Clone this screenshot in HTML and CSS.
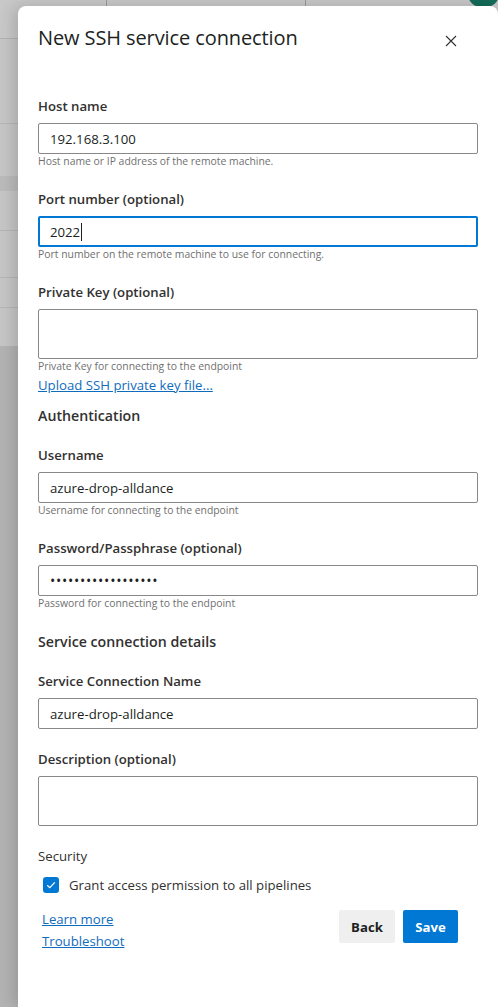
FILE: index.html
```html
<!DOCTYPE html>
<html lang="en">
<head>
<meta charset="utf-8">
<title>New SSH service connection</title>
<link rel="stylesheet" href="styles.css">
</head>
<body>
<div class="page">
  <div class="topbar">
    <div class="tb-cell tb-a"></div>
    <div class="tb-cell tb-b"></div>
    <div class="tb-cell tb-c"><span class="avatar"></span></div>
  </div>
  <div class="row r1"></div>
  <div class="row r2"></div>
  <div class="row r3"></div>
  <div class="row r4"></div>
  <div class="row r5"></div>
  <div class="row r6"></div>
  <div class="row r7"></div>
  <div class="rest"></div>
</div>

<div class="dialog">
  <div class="header">
    <h1 class="title">New SSH service connection</h1>
    <button class="close" aria-label="Close">
      <svg width="12" height="12" viewBox="0 0 12 12"><path d="M1 1 L11 11 M11 1 L1 11" stroke="#323130" stroke-width="1.1" fill="none"/></svg>
    </button>
  </div>

  <div class="field first">
    <label class="label">Host name</label>
    <div class="input"><span>192.168.3.100</span></div>
    <div class="help">Host name or IP address of the remote machine.</div>
  </div>

  <div class="field">
    <label class="label">Port number (optional)</label>
    <div class="input focused"><span>2022</span><span class="caret"></span></div>
    <div class="help">Port number on the remote machine to use for connecting.</div>
  </div>

  <div class="field">
    <label class="label">Private Key (optional)</label>
    <div class="input area"></div>
    <div class="help">Private Key for connecting to the endpoint</div>
    <a class="link upload" href="#">Upload SSH private key file...</a>
  </div>

  <h2 class="section after-link">Authentication</h2>

  <div class="field">
    <label class="label">Username</label>
    <div class="input"><span>azure-drop-alldance</span></div>
    <div class="help">Username for connecting to the endpoint</div>
  </div>

  <div class="field">
    <label class="label">Password/Passphrase (optional)</label>
    <div class="input"><span class="dots">••••••••••••••••••</span></div>
    <div class="help">Password for connecting to the endpoint</div>
  </div>

  <h2 class="section">Service connection details</h2>

  <div class="field">
    <label class="label">Service Connection Name</label>
    <div class="input"><span>azure-drop-alldance</span></div>
  </div>

  <div class="field no-help-above">
    <label class="label">Description (optional)</label>
    <div class="input area"></div>
  </div>

  <div class="security">Security</div>
  <div class="check-row">
    <span class="checkbox">
      <svg width="10" height="8" viewBox="0 0 10 8"><path d="M1.2 4.2 L3.8 6.6 L8.8 1.4" stroke="#fff" stroke-width="1.2" fill="none"/></svg>
    </span>
    <span class="check-text">Grant access permission to all pipelines</span>
  </div>

  <div class="footer">
    <div class="links">
      <a class="link" href="#">Learn more</a>
      <a class="link" href="#">Troubleshoot</a>
    </div>
    <div class="buttons">
      <button class="btn back">Back</button>
      <button class="btn save">Save</button>
    </div>
  </div>
</div>
</body>
</html>
```

FILE: styles.css
```css
* { box-sizing: border-box; }
html, body { margin: 0; padding: 0; }
body {
  width: 498px;
  height: 1007px;
  overflow: hidden;
  position: relative;
  font-family: "Open Sans", "Noto Sans", sans-serif;
  color: #201f1e;
  background: #b3b3b3;
}

/* dimmed page behind the dialog */
.page { display: flex; flex-direction: column; height: 1007px; }
.topbar { display: flex; height: 39px; background: #c8c8c8; border-bottom: 1px solid #b2b2b2; }
.tb-cell { height: 100%; }
.tb-a { width: 107px; border-right: 1px solid #9a9a9a; }
.tb-b { width: 199px; border-right: 1px solid #9a9a9a; }
.tb-c { flex: 1; position: relative; }
.avatar {
  position: absolute; left: 161px; top: -25px;
  width: 33px; height: 33px; border-radius: 50%;
  background: #136b58;
}
.row { background: #c6c6c6; border-bottom: 1px solid #b6b6b6; }
.r1 { height: 85px; }
.r2 { height: 52px; border-bottom: none; }
.r3 { height: 15px; background: #bbbbbb; border-bottom: none; }
.r4 { height: 40px; }
.r5 { height: 47px; }
.r6 { height: 30px; }
.r7 { height: 38px; border-bottom: none; }
.rest { flex: 1; background: #b3b3b3; }

/* dialog overlay */
.dialog {
  position: absolute;
  left: 18px; top: 6px; right: 0; bottom: 0;
  background: #fff;
  border-radius: 8px 8px 0 0;
  box-shadow: -4px 0 16px rgba(0,0,0,0.16);
  padding: 18px 20px 0 20px;
}
.header { display: flex; justify-content: space-between; align-items: flex-start; height: 28px; }
.title { margin: 0; font-size: 20px; line-height: 28px; font-weight: 500; color: #201f1e; letter-spacing: -0.1px; }
.close {
  border: 0; background: none; padding: 0; margin: 11px 21px 0 0;
  width: 12px; height: 12px; display: flex; cursor: pointer;
}

.field { display: flex; flex-direction: column; margin-top: 21px; }
.field.first { margin-top: 44px; }
.field.no-help-above { margin-top: 20px; }
.label { font-size: 13.2px; line-height: 20px; font-weight: 600; color: #323130; }
.input {
  margin-top: 7px;
  height: 31px;
  border: 1px solid #8a8886;
  border-radius: 2px;
  padding: 0 11px;
  display: flex; align-items: center;
  font-size: 13.2px; color: #201f1e;
}
.input.focused { border: 2px solid #0078d4; padding-left: 10px; }
.caret { width: 1px; height: 18px; background: #201f1e; margin-left: 1px; }
.input.area { height: 50px; }
.dots { letter-spacing: 0.75px; font-size: 14px; }
.help { font-size: 10.4px; line-height: 14px; color: #707070; }
.link { font-size: 13.2px; line-height: 20px; color: #0f6cbd; text-decoration: underline; }
.upload { margin-top: 2px; }

.section { margin: 21px 0 0; font-size: 14.2px; line-height: 22px; font-weight: 600; color: #323130; }
.section.after-link { margin-top: 10px; }
.section + .field { margin-top: 18px; }

.security { margin-top: 20px; font-size: 13.2px; line-height: 20px; color: #323130; }
.check-row { display: flex; align-items: center; margin-top: 9px; padding-left: 5px; height: 20px; }
.checkbox {
  width: 16px; height: 16px; border-radius: 3px; background: #0078d4;
  display: flex; align-items: center; justify-content: center;
}
.check-text { margin-left: 10px; font-size: 13.2px; color: #323130; }

.footer { display: flex; justify-content: space-between; align-items: flex-start; margin-top: 14px; padding-right: 20px; }
.links { display: flex; flex-direction: column; gap: 2px; padding-left: 4px; }
.buttons { display: flex; gap: 8px; margin-top: 1px; }
.btn {
  height: 33px; border: 0; border-radius: 2px;
  font-family: inherit; font-size: 13.2px; font-weight: 700;
  padding: 0; cursor: pointer;
}
.back { background: #efefef; color: #201f1e; width: 56px; }
.save { background: #0078d4; color: #fff; width: 55px; }
```
